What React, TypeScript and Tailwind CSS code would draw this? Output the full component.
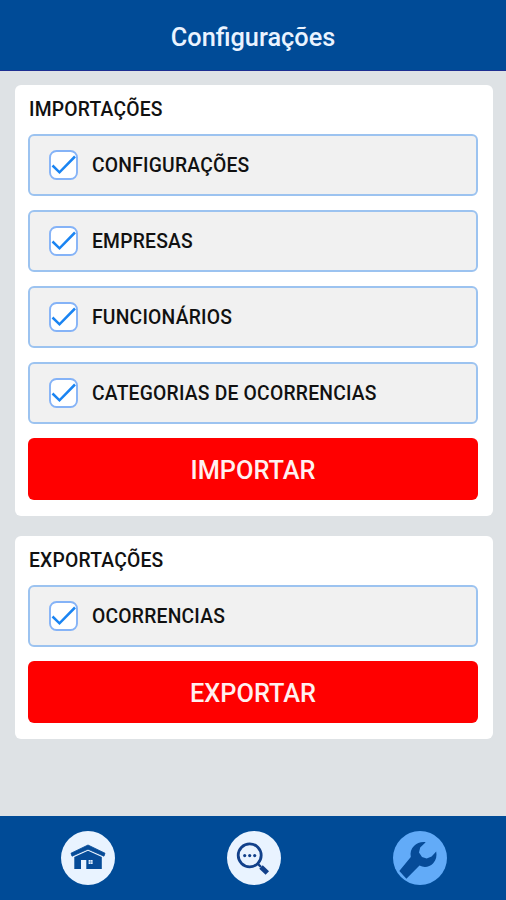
import React from "react";

type CheckRowProps = {
  label: string;
};

const CheckRow = ({ label }: CheckRowProps) => {
  return (
    <div className="flex items-center h-[62px] mb-[14px] pl-[19px] rounded-md border-2 border-[#9cc3f0] bg-[#f1f1f1]">
      <svg width="29" height="30" viewBox="0 0 29 30" fill="none">
        <rect x="1" y="1" width="27" height="28" rx="6.5" fill="#fff" stroke="#85b3f7" strokeWidth="1.9" />
        <path d="M3.5 15.5 L10.5 22.3 L26 6.5" stroke="#1a84f2" strokeWidth="2.5" />
      </svg>
      <span className="ml-[14px] pt-0.5 text-[19.3px] leading-6 font-medium tracking-[0.22px] text-[#111]">
        {label}
      </span>
    </div>
  );
};

const ActionButton = ({ label }: CheckRowProps) => {
  return (
    <button className="block w-full h-[62px] pt-[3px] rounded-md bg-[#ff0000] text-[25.3px] font-medium text-[#fff0f0]">
      {label}
    </button>
  );
};

const HomeIcon = () => (
  <svg width="54" height="54" viewBox="0 0 54 54">
    <circle cx="27" cy="27" r="27" fill="#e9f3ff" />
    <path
      d="M10 22.2 L27 14 L44 22.2 L43 25.2 L27 18.2 L11 25.2 Z"
      fill="#064b98"
      stroke="#064b98"
      strokeWidth="0.8"
      strokeLinejoin="round"
    />
    <path d="M13.3 26 L27 19.8 L40.8 26 V38 H25.3 V29 H20 V38 H13.3 Z" fill="#064b98" />
    <path d="M27.6 29 H31.6 V33 H27.6 Z" fill="#e9f3ff" />
    <path d="M29.6 29 V33 M27.6 31 H31.6" stroke="#064b98" strokeWidth="0.4" />
  </svg>
);

const SearchIcon = () => (
  <svg width="54" height="54" viewBox="0 0 54 54">
    <circle cx="27" cy="27" r="27" fill="#e9f3ff" />
    <circle cx="22.7" cy="24.3" r="11.5" fill="none" stroke="#12408a" strokeWidth="2.8" />
    <circle cx="17.7" cy="24.6" r="1.6" fill="#12408a" />
    <circle cx="22.7" cy="24.6" r="1.6" fill="#12408a" />
    <circle cx="27.7" cy="24.6" r="1.6" fill="#12408a" />
    <path d="M30.5 32.5 L34 36" stroke="#12408a" strokeWidth="2.4" />
    <path d="M34 36 L40.3 42" stroke="#12408a" strokeWidth="5" />
  </svg>
);

const WrenchIcon = () => (
  <svg width="54" height="54" viewBox="0 0 54 54">
    <circle cx="27" cy="27" r="27" fill="#62abf8" />
    <path
      d="M32.7 11.2 C28 10.6 24 12 21 15 C18 18 17 21.5 17.8 26 L6.3 40 L13.4 47.8 L26.5 34.6 C31 37 36.5 36.2 40 32.5 C43.2 29 44 25 43.2 20.5 L38.6 25.6 L33.7 27.6 L29 26 L26 21.5 L27.2 16.6 Z"
      fill="#064b98"
    />
  </svg>
);

const App = () => {
  return (
    <div className="flex flex-col w-[506px] h-[900px] bg-[#dee2e5] font-[Roboto,sans-serif]">
      <header className="flex items-center justify-center h-[71px] pt-[5px] border-b border-[#1d2f91] bg-[#004b97]">
        <h1 className="text-[25.3px] font-medium text-[#eaf3ff]">Configurações</h1>
      </header>

      <main className="flex-1 pt-[14px] pl-[14.5px] pr-[13.5px]">
        <section className="h-[431px] pl-[13.5px] pr-[14.5px] rounded-md bg-white">
          <h2 className="h-[49px] pl-px pt-[13px] text-[19.3px] leading-6 font-medium tracking-[0.22px] text-[#111]">
            IMPORTAÇÕES
          </h2>
          <CheckRow label="CONFIGURAÇÕES" />
          <CheckRow label="EMPRESAS" />
          <CheckRow label="FUNCIONÁRIOS" />
          <CheckRow label="CATEGORIAS DE OCORRENCIAS" />
          <ActionButton label="IMPORTAR" />
        </section>

        <section className="h-[203px] mt-5 pl-[13.5px] pr-[14.5px] rounded-md bg-white">
          <h2 className="h-[49px] pl-px pt-[13px] text-[19.3px] leading-6 font-medium tracking-[0.22px] text-[#111]">
            EXPORTAÇÕES
          </h2>
          <CheckRow label="OCORRENCIAS" />
          <ActionButton label="EXPORTAR" />
        </section>
      </main>

      <nav className="flex justify-between h-[84px] pt-[15px] pl-[61px] pr-[59px] bg-[#004b97]">
        <HomeIcon />
        <SearchIcon />
        <WrenchIcon />
      </nav>
    </div>
  );
};
export default App;
